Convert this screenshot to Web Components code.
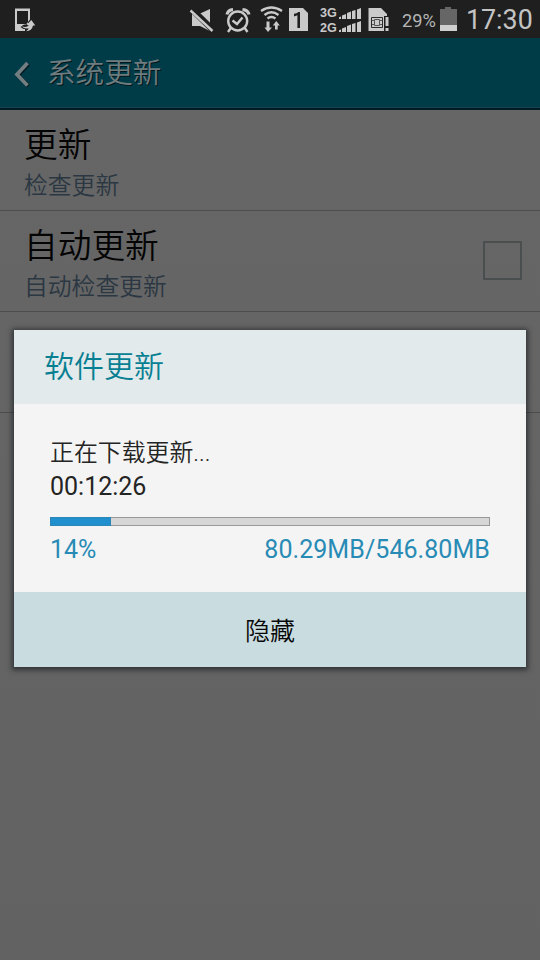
<!DOCTYPE html>
<html lang="zh-CN">
<head>
<meta charset="utf-8">
<title>系统更新</title>
<style>
html,body{margin:0;width:540px;height:960px;overflow:hidden;background:#646464}
body{font-family:Roboto,"Noto Sans CJK SC",sans-serif}
</style>
</head>
<body>
<phone-screen>
  <status-bar></status-bar>
  <title-bar>系统更新</title-bar>
  <setting-row>更新<span slot="summary">检查更新</span></setting-row>
  <setting-row>自动更新<span slot="summary">自动检查更新</span><check-box slot="control"></check-box></setting-row>
  <setting-row></setting-row>
  <update-dialog slot="overlay" action="隐藏">
    <span slot="title">软件更新</span>
    <download-progress value="14" time="00:12:26" amount="80.29MB/546.80MB">正在下载更新...</download-progress>
  </update-dialog>
</phone-screen>
<script>
function define(name, html) {
  customElements.define(name, class extends HTMLElement {
    constructor() {
      super();
      this.attachShadow({mode: 'open'}).innerHTML =
        html.replace(/\{(\w+)\}/g, (m, key) => this.getAttribute(key) || '');
    }
  });
}

define('phone-screen', `<style>
:host{display:flex;flex-direction:column;position:relative;width:540px;height:960px;background:linear-gradient(#666 110px,#626262)}
.overlay{position:absolute;left:14px;top:330px}
</style><slot></slot><div class="overlay"><slot name="overlay"></slot></div>`);

define('status-bar', `<style>
:host{display:flex;height:38px;background:#1f1f1f;color:#c9c9c9;align-items:center}
svg{display:block;height:38px;flex:none;fill:#cacaca;stroke:none}
.grow{flex:1}
.pct{font-size:18.3px;line-height:38px;width:38px;color:#b5b5b5;padding-top:3px;white-space:nowrap}
.time{font-size:26.8px;line-height:38px;width:74px;white-space:nowrap;padding-top:1px;margin-left:-1px;color:#c4c4c4}
.net{font:bold 12.6px/15px "Liberation Sans",sans-serif;width:19px;padding-top:3px}
</style>
<svg width="48" viewBox="0 0 48 38"><path fill-rule="evenodd" d="M15 8.5H30V19.5L26 24.5H15ZM17 11V24H28V11Z"/><path d="M15 24H24.5L20.5 27L23.5 29H25V31H15Z"/><path d="M21.5 26.3Q27 28 28.8 25H26.5L31.3 20L35.3 25.5H33Q32 31 26 31.3Q28.5 30 28.6 28.3Q24.5 29.3 21.5 26.3Z"/></svg>
<span class="grow"></span>
<svg width="37" viewBox="184 0 37 38"><path d="M192 14H199L210 9V31L200 26H192Z"/><path d="M191.5 9L213.5 30.5" stroke="#1f1f1f" stroke-width="6.4"/><path d="M190.5 10.5L212.5 31" stroke="#cacaca" stroke-width="2.4"/></svg>
<svg width="36" viewBox="221 0 36 38"><g fill="none" stroke="#cacaca" stroke-width="2.4"><circle cx="237.7" cy="21" r="9.5"/><path d="M232.5 20.5L237 24L242.5 17.5M230.8 28L228 32M244.8 28L247.5 32"/><path stroke-width="3.2" d="M227 14.5Q228 10 233 9.5M242.5 9.5Q248 10 249 14.5"/></g></svg>
<svg width="30" viewBox="257 0 30 38"><g fill="none" stroke="#cacaca" stroke-width="2.3"><path d="M261 11Q271.3 4 282 11M264.5 15Q271.3 9.5 278.5 15M267.5 18.5Q271.3 15.5 275.5 18.5"/></g><path d="M266.5 21.5H269.5V27.5H272L268 32L264.5 27.5H266.5ZM275 29.5H277.7V25.5H279.8L276.3 21L272.8 25.5H275Z"/></svg>
<svg width="33" viewBox="287 0 33 38"><path fill-rule="evenodd" d="M289 8H303L308 13V31H289ZM294 13.8V16.6L297.4 15.2V28H300V12H298.4Q297 13.5 294 13.8Z"/></svg>
<div class="net"><div>3G</div><div>2G</div></div>
<svg width="29" viewBox="339 0 29 38"><path d="M338 17.5L341 16.5V19H338ZM342 15.5L346 14V19H342ZM347 13L351 11.5V19H347ZM352 11L355.5 10V19H352ZM357 9.5L361 8V19H357ZM338 30.5L341 29.5V32H338ZM342 28.5L346 27V32H342ZM347 26L351 24.5V32H347ZM352 24L355.5 23V32H352ZM357 22.5L361 21V32H357Z"/></svg>
<svg width="34" viewBox="368 0 34 38"><path d="M368.5 8H381L387 14V17H384V31H368.5Z"/><g fill="none" stroke="#2b2b2b"><path d="M371.5 17.5H382.5V27.5H371.5Z"/><path stroke="#555" d="M374.5 19.5H379.5V25.5H374.5ZM372 20.5H374M372 24.5H374M380 20.5H382M380 24.5H382"/></g><path d="M384 16H389V32H384Z" fill="#1f1f1f"/><path d="M385.5 17H388.5V26H385.5ZM385.5 28H388.5V31H385.5Z"/></svg>
<span class="pct">29%</span>
<svg width="27" viewBox="440 0 27 38"><path fill="#666" d="M440 9H445V7H451V9H457V25H440Z"/><path fill="#cfcfcf" d="M440 25H457V31H440Z"/></svg>
<span class="time">17:30</span>`);

define('title-bar', `<style>
:host{display:flex;box-sizing:border-box;height:72px;background:#003c48;border-bottom:2px solid #011c24;box-shadow:inset 0 -1px #16434d;color:#6f7c7f;align-items:center;font-size:28.6px;font-weight:350;text-shadow:1px 1px #00161b}
svg{width:48px;height:70px;flex:none}
div{line-height:70px;margin-left:-1px}
</style><svg viewBox="0 38 48 70"><path d="M28.5 64L18 75.5L28.5 86" fill="none" stroke="#011a20" stroke-width="4"/><path d="M27.5 63L17 74.5L27.5 85.5" fill="none" stroke="#727e81" stroke-width="3.8"/></svg><div><slot></slot></div>`);

define('setting-row', `<style>
:host{display:flex;box-sizing:border-box;height:101px;padding:0 18px 0 24px;border-bottom:1px solid #4d4d4d;align-items:center;justify-content:space-between}
.title{font-size:33.7px;line-height:44px;color:#040404;font-weight:350}
.sub{font-size:23.8px;line-height:36px;color:#2b3742;font-weight:350}
.text{padding-top:7px}
::slotted(check-box){margin-top:-2px}
</style><div class="text"><div class="title"><slot></slot></div><div class="sub"><slot name="summary"></slot></div></div><slot name="control"></slot>`);

define('check-box', `<style>:host{display:block;box-sizing:border-box;width:39px;height:39px;border:2px solid #4b4e4f}</style>`);

define('update-dialog', `<style>
:host{display:flex;flex-direction:column;width:512px;height:337px;background:#f4f4f4;box-shadow:0 1px 5px 2px rgba(20,25,28,.65)}
header{height:74px;line-height:74px;padding-left:30px;background:#e2eaeb;color:#087f92;font-size:30px;font-weight:350}
main{flex:1;padding:32px 36px 0}
footer{height:75px;line-height:79px;text-align:center;background:#c9dcdf;color:#070707;font-size:25px;font-weight:350}
</style><header><slot name="title"></slot></header><main><slot></slot></main><footer>{action}</footer>`);

define('download-progress', `<style>
:host{display:block;color:#242424}
.label{font-size:23.9px;line-height:34px;font-weight:350}
.time{font-size:25px;line-height:34px}
.bar{box-sizing:border-box;height:9px;margin-top:13px;border:1px solid #989898;background:#d6d6d6;display:flex}
.fill{width:59px;background:#1f8fce;outline:1px solid #2c86b8}
.nums{display:flex;justify-content:space-between;color:#278bb5;font-size:25px;line-height:34px;margin-top:7px}
.amount{letter-spacing:.06px}
</style><div class="label"><slot></slot></div><div class="time">{time}</div><div class="bar"><div class="fill"></div></div><div class="nums"><span>{value}%</span><span class="amount">{amount}</span></div>`);
</script>
</body>
</html>
